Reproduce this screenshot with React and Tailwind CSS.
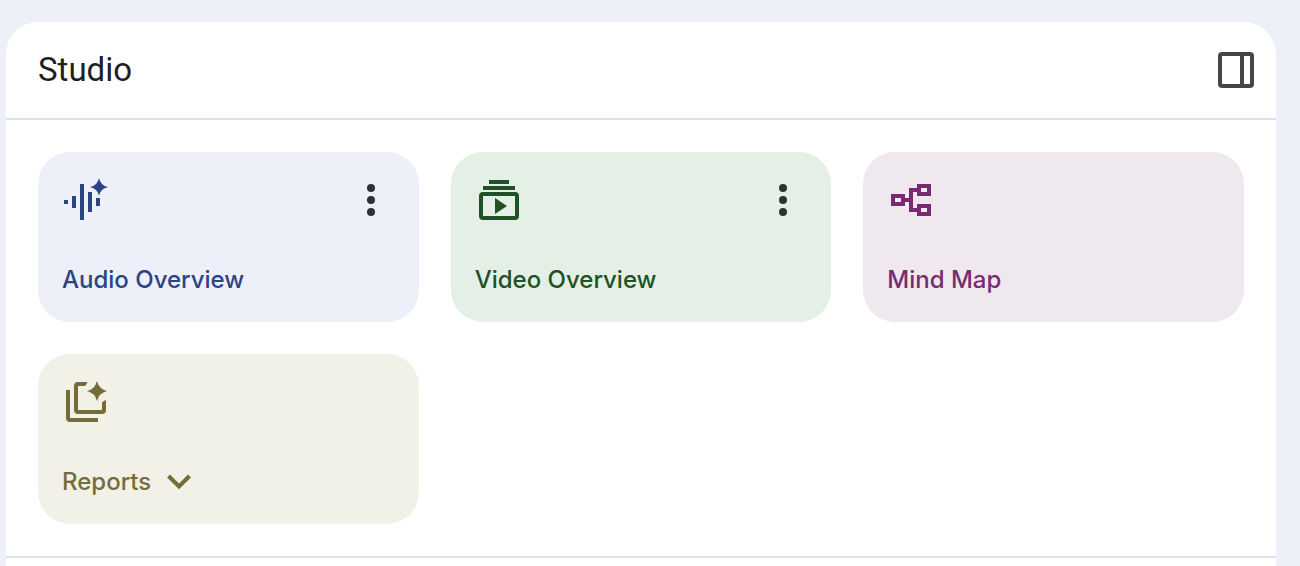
import { clsx } from "clsx";

function AudioIcon() {
  return (
    <svg viewBox="0 0 48 48" fill="currentColor" className="size-12" aria-hidden="true">
      <path d="M2 24h4v4H2zM10 20h4v12h-4zM18 8h4v36h-4zM26 16h4v20h-4zM34 22h4v8h-4z" />
      <path d="M37 2Q38.5 9.5 46 11Q38.5 12.5 37 20Q35.5 12.5 28 11Q35.5 9.5 37 2z" />
    </svg>
  );
}

function VideoIcon() {
  return (
    <svg viewBox="0 0 48 48" fill="currentColor" className="size-12" aria-hidden="true">
      <path d="M14 4h20v4H14zM8 10h32v4H8zM20 22l12 8-12 8z" />
      <path
        fillRule="evenodd"
        d="M8 16h32a4 4 0 0 1 4 4v20a4 4 0 0 1-4 4H8a4 4 0 0 1-4-4V20a4 4 0 0 1 4-4zM8 20v20h32V20z"
      />
    </svg>
  );
}

function MindMapIcon() {
  return (
    <svg viewBox="0 0 48 48" fill="none" stroke="currentColor" strokeWidth="4" className="size-12" aria-hidden="true">
      <path d="M6 20h10v8H6zM32 10h10v8H32zM32 30h10v8H32z" />
      <path d="M18 24h6M30 14h-6v20h6" />
    </svg>
  );
}

function ReportsIcon() {
  return (
    <svg viewBox="0 0 48 48" fill="currentColor" className="size-12" aria-hidden="true">
      <path d="M4 12h4v28h28v4H8a4 4 0 0 1-4-4z" />
      <path d="M16 4h9.5a11 11 0 0 1-2.5 4h-7v24h24v-7.5a11 11 0 0 1 4-2.5v10a4 4 0 0 1-4 4H16a4 4 0 0 1-4-4V8a4 4 0 0 1 4-4z" />
      <path d="M35 3Q37 11 45 13Q37 15 35 23Q33 15 25 13Q33 11 35 3z" />
    </svg>
  );
}

function MoreIcon() {
  return (
    <svg viewBox="0 0 48 48" fill="currentColor" className="size-12" aria-hidden="true">
      <circle cx="24" cy="12" r="4" />
      <circle cx="24" cy="24" r="4" />
      <circle cx="24" cy="36" r="4" />
    </svg>
  );
}

function PanelIcon() {
  return (
    <svg viewBox="0 0 48 48" fill="none" stroke="currentColor" strokeWidth="4" className="size-12" aria-hidden="true">
      <rect x="8" y="8" width="32" height="32" rx="2" />
      <path d="M30 8v32" />
    </svg>
  );
}

function ChevronIcon() {
  return (
    <svg viewBox="0 0 24 24" fill="none" stroke="currentColor" strokeWidth="4" className="size-6" aria-hidden="true">
      <path d="M1.5 6L12 16.5L22.5 6" />
    </svg>
  );
}

const tools = [
  { name: "Audio Overview", Icon: AudioIcon, hasMenu: true, color: "bg-[#edeff9] text-[#2a4486]" },
  { name: "Video Overview", Icon: VideoIcon, hasMenu: true, color: "bg-[#e4efe5] text-[#215126]" },
  { name: "Mind Map", Icon: MindMapIcon, color: "bg-[#efe8ee] text-[#782b72]" },
  { name: "Reports", Icon: ReportsIcon, expandable: true, color: "bg-[#f1f1e7] text-[#786b3a]" },
];

function ToolCard({ name, Icon, hasMenu, expandable, color }) {
  return (
    <div className={clsx("flex flex-col gap-[38px] rounded-[32px] p-6", color)}>
      <div className="flex justify-between">
        <Icon />
        {hasMenu && (
          <button type="button" aria-label={`${name} options`} className="text-[#303030]">
            <MoreIcon />
          </button>
        )}
      </div>
      <button type="button" className="flex items-center gap-4 self-start text-2xl/9 font-medium">
        {name}
        {expandable && <ChevronIcon />}
      </button>
    </div>
  );
}

export default function App() {
  return (
    <div className="h-screen overflow-hidden bg-[#edeff9] pt-[22px] pr-6 pl-1.5 font-['Inter',sans-serif]">
      <main className="min-h-full rounded-t-[32px] bg-white">
        <header className="flex items-center justify-between border-b-2 border-[#dde1eb] py-6 pr-4 pl-8">
          <h1 className="font-['Roboto',sans-serif] text-[33px]/[48px] text-[#1f1f1f]">Studio</h1>
          <button type="button" aria-label="Collapse studio panel" className="text-[#444746]">
            <PanelIcon />
          </button>
        </header>
        <section className="grid grid-cols-3 gap-8 border-b-2 border-[#dde1eb] p-8">
          {tools.map((tool) => (
            <ToolCard key={tool.name} {...tool} />
          ))}
        </section>
      </main>
    </div>
  );
}
